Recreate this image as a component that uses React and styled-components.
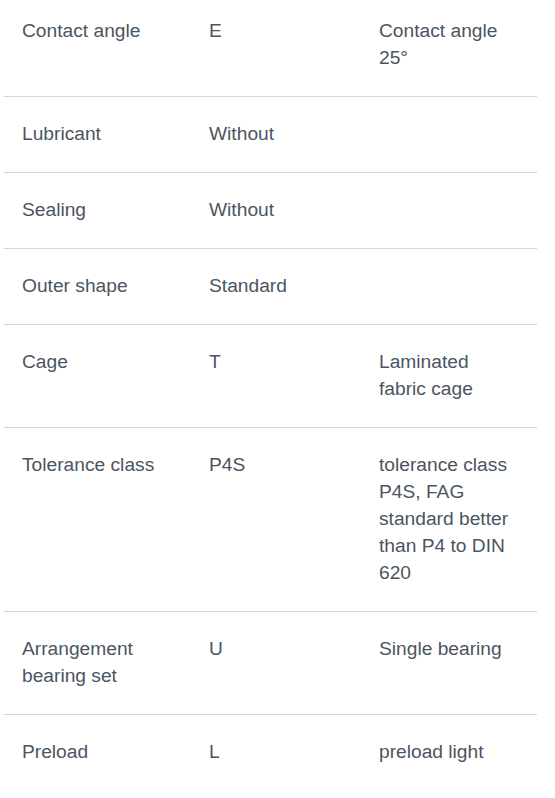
import React from 'react';
import styled, { createGlobalStyle } from 'styled-components';

const GlobalStyle = createGlobalStyle`
  body {
    margin: 0;
    background: #ffffff;
    font-family: "Liberation Sans", Arial, sans-serif;
  }
`;

const rows = [
  { label: 'Contact angle', code: 'E', desc: 'Contact angle 25°' },
  { label: 'Lubricant', code: 'Without', desc: '' },
  { label: 'Sealing', code: 'Without', desc: '' },
  { label: 'Outer shape', code: 'Standard', desc: '' },
  { label: 'Cage', code: 'T', desc: 'Laminated fabric cage' },
  { label: 'Tolerance class', code: 'P4S', desc: 'tolerance class P4S, FAG standard better than P4 to DIN 620' },
  { label: 'Arrangement bearing set', code: 'U', desc: 'Single bearing' },
  { label: 'Preload', code: 'L', desc: 'preload light' },
];

const Wrapper = styled.div`
  width: 533px;
  margin: -6px 0 0 4px;
`;

const Table = styled.div`
  display: flex;
  flex-direction: column;
`;

const Row = styled.div`
  display: grid;
  grid-template-columns: 187px 170px 176px;
  border-bottom: 1px solid #d1d6dd;
  &:last-child {
    border-bottom: none;
  }
`;

const Cell = styled.div`
  padding: 23px 18px 25px;
  font-size: 19.2px;
  line-height: 27px;
  color: #4b5562;
`;

const App = () => {
  return (
    <>
      <GlobalStyle />
      <Wrapper>
        <Table>
          {rows.map((row, index) => (
            <Row key={index}>
              <Cell>{row.label}</Cell>
              <Cell>{row.code}</Cell>
              <Cell>{row.desc}</Cell>
            </Row>
          ))}
        </Table>
      </Wrapper>
    </>
  );
};

export default App;
